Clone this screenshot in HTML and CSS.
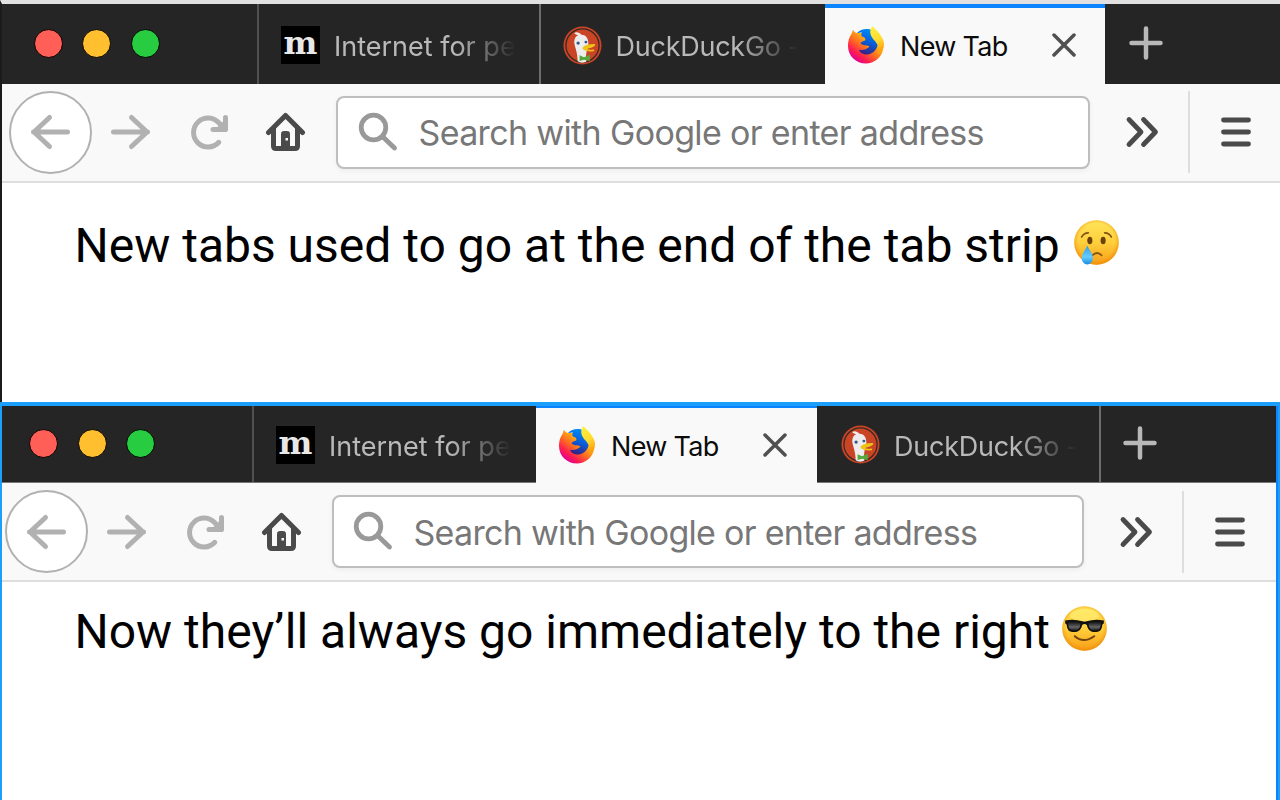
FILE: index.html
```html
<!DOCTYPE html>
<html lang="en">
<head>
<meta charset="utf-8">
<title>New tab placement</title>
<link rel="stylesheet" href="styles.css">
</head>
<body>
<svg class="sprites" aria-hidden="true">
  <defs>
    <linearGradient id="fox" x1=".85" y1=".1" x2=".2" y2=".9">
      <stop offset="0" stop-color="#fff044"/><stop offset=".3" stop-color="#ffb414"/><stop offset=".58" stop-color="#ff6a22"/><stop offset=".82" stop-color="#ff1d50"/><stop offset="1" stop-color="#e00094"/>
    </linearGradient>
    <linearGradient id="globe" x1=".7" y1="0" x2=".4" y2="1">
      <stop offset="0" stop-color="#0090f5"/><stop offset=".5" stop-color="#075fdc"/><stop offset="1" stop-color="#372080"/>
    </linearGradient>
    <linearGradient id="flame" x1="0" y1="0" x2=".3" y2="1">
      <stop offset="0" stop-color="#fff23e"/><stop offset=".6" stop-color="#ffdb2e"/><stop offset="1" stop-color="#ff9d10"/>
    </linearGradient>
    <linearGradient id="face" x1="0" y1="0" x2="0" y2="1">
      <stop offset="0" stop-color="#ffe45a"/><stop offset=".5" stop-color="#ffcf3c"/><stop offset="1" stop-color="#f79d16"/>
    </linearGradient>
    <radialGradient id="shade" cx=".5" cy=".48" r=".53">
      <stop offset=".78" stop-color="#f08a00" stop-opacity="0"/><stop offset="1" stop-color="#e88508" stop-opacity=".65"/>
    </radialGradient>
    <linearGradient id="tear" x1="0" y1="0" x2="0" y2="1">
      <stop offset="0" stop-color="#2d9fe0"/><stop offset=".6" stop-color="#66ccff"/><stop offset="1" stop-color="#168be0"/>
    </linearGradient>
    <linearGradient id="lens" x1="0" y1="0" x2="0" y2="1">
      <stop offset="0" stop-color="#111"/><stop offset=".6" stop-color="#666"/><stop offset="1" stop-color="#1a1a1a"/>
    </linearGradient>
  </defs>
  <symbol id="i-arrow" viewBox="0 0 40 40"><path d="M3.5 20H37.500M19.500 5.500 4 20 19.500 34.500"/></symbol>
  <symbol id="i-reload" viewBox="0 0 40 40"><path d="M29.800 30.300A14.500 14.500 0 1 1 30 11L36 17"/><path d="M36.500 5.500V17.500H24"/><path class="solid" d="M36 11v6h-6z"/></symbol>
  <symbol id="i-home" viewBox="0 0 42 42"><path d="M4.500 21.500 21.500 4.500 38.500 21.500M9.500 18V35Q9.500 37.500 12 37.500H31Q33.500 37.500 33.500 35V18"/><path class="solid thin" d="M17.500 37V22.500Q17.500 20.500 19.500 20.500H23.500Q25.500 20.500 25.500 22.500V37Z"/><rect class="knob" x="21.500" y="27" width="2.500" height="2.500"/></symbol>
  <symbol id="i-search" viewBox="0 0 42 42"><circle cx="16.500" cy="15.500" r="12.300"/><path d="M25.500 24.500 37.500 36"/></symbol>
  <symbol id="i-more" viewBox="0 0 36 34"><path d="M4 4.500 16 17 4 29.500M18.500 4.500 30.500 17 18.500 29.500"/></symbol>
  <symbol id="i-menu" viewBox="0 0 30 30"><path d="M2.500 3H27.500M2.500 15H27.500M2.500 27H27.500"/></symbol>
  <symbol id="i-close" viewBox="0 0 24 24"><path d="M2 2 22 22M22 2 2 22"/></symbol>
  <symbol id="i-plus" viewBox="0 0 34 34"><path d="M17 2.500V31.500M2.500 17H31.500"/></symbol>
  <symbol id="i-firefox" viewBox="0 0 38 38">
    <path fill="url(#fox)" d="M6 3.500C7 6 8 6.500 10 7H30C36 12 38 18 36 24C34 32 27 37.500 19 37.500C9 37.500 1 30 1 20C1 14 3 10 4.500 8C5 6.500 5.500 5 6 3.500Z"/>
    <path fill="url(#globe)" d="M10 7C15 1.500 26 1.500 30 9C33 17 30 27 21 28.500C17 29 13 27 12 24C16 24 20 23.500 22.500 20.500C20.500 19 17 20 14 18C13 16.500 15 15.500 18 14.500C19 13.500 18.500 12 16.500 11C14 11 14 8 15 6.500C13 6.500 12 7 10 7Z"/>
    <path fill="url(#flame)" d="M25.500 0C27 2.500 34 7 36.500 15C38 22 34 27 30.500 29C33 22 31 19 28 15C24 11 21 6 25.500 0Z"/>
  </symbol>
  <symbol id="i-duck" viewBox="0 0 40 40">
    <circle cx="20" cy="20" r="19.500" fill="#ca4526"/><circle cx="20" cy="20" r="17" fill="none" stroke="#382822" stroke-width="1.300"/>
    <path fill="#ededed" d="M11.500 7.500C13 5.500 17 6.500 19 9C23 9 26 12 26 18C26 23 22.500 27 24 36.500C22 38 17 38 15 36C15 28 12.500 23 11.500 17C11.500 13 13 10.500 15.500 9.500Q13 9 11.500 7.500Z"/>
    <circle cx="15.500" cy="17.500" r="1.700" fill="#345789"/><circle cx="23.500" cy="16.500" r="1.500" fill="#345789"/>
    <path fill="none" stroke="#eec316" stroke-width="2" stroke-linecap="round" d="M21 22.500Q24 19.500 32 19.500Q29 22 21 23Q25 26 31 25"/>
    <path fill="#55a83e" d="M17 30 21.500 32 27.500 29.500V36L21.500 34.500 17 36Z"/>
  </symbol>
  <symbol id="i-cry" viewBox="0 0 44 44">
    <circle cx="22" cy="22" r="21.800" fill="url(#face)"/><circle cx="22" cy="22" r="21.800" fill="url(#shade)"/>
    <ellipse cx="15.500" cy="20" rx="2.500" ry="3.700" fill="#69420e"/><ellipse cx="28.500" cy="20" rx="2.500" ry="3.700" fill="#69420e"/>
    <path fill="none" stroke="#825317" stroke-width="1.700" stroke-linecap="round" d="M7.500 16.500Q9.500 12.700 14 12.500M30 12.500Q34.500 12.700 36.500 16.500M18 34.500Q22.500 30 27 34.500"/>
    <path fill="url(#tear)" d="M13 25C15 30 18.500 33 18.500 37C18.500 41 16 43.500 13 43.500S7.500 41 7.500 37C7.500 33 11 30 13 25Z"/>
  </symbol>
  <symbol id="i-cool" viewBox="0 0 44 44">
    <circle cx="22" cy="22" r="21.800" fill="url(#face)"/><circle cx="22" cy="22" r="21.800" fill="url(#shade)"/>
    <ellipse cx="22" cy="9" rx="14" ry="6" fill="#fff27b" opacity=".5"/>
    <path fill="#111" d="M3 14.200Q12 12.500 20 15Q22 15.600 24 15Q32 12.500 41 14.200L40.800 17L39.500 18C39 24 36.500 25.500 32 25.500C27 25.500 25 22 24.300 18.500Q22 16.800 19.700 18.500C19 22 17 25.500 12 25.500C7.500 25.500 5 24 4.500 18L3.200 17Z"/>
    <path fill="url(#lens)" d="M6 16Q12 14.800 18 16.500C18 21 16 24 12 24C7.500 24 6 22 6 16ZM26 16.500Q32 14.800 38 16C38 22 36.500 24 32 24C28 24 26 21 26 16.500Z"/>
    <path fill="none" stroke="#70420f" stroke-width="1.900" stroke-linecap="round" d="M12.500 29.500Q21 37 31.500 29.500"/>
  </symbol>
</svg>

<main>
<section class="shot before">
  <div class="tabs">
    <div class="lights"><i class="red"></i><i class="yellow"></i><i class="green"></i></div>
    <div class="tab ruled"><span class="moz">m</span><span class="label faded">Internet for pe</span></div>
    <div class="tab ruled light"><svg class="favicon"><use href="#i-duck"/></svg><span class="label faded duck">DuckDuckGo -</span></div>
    <div class="tab active"><svg class="firefox"><use href="#i-firefox"/></svg><span class="label">New Tab</span><svg class="close"><use href="#i-close"/></svg></div>
    <div class="newtab"><svg class="plus"><use href="#i-plus"/></svg></div>
  </div>
  <div class="nav">
    <span class="back"><svg class="arrow"><use href="#i-arrow"/></svg></span>
    <svg class="arrow forward"><use href="#i-arrow"/></svg>
    <svg class="reload"><use href="#i-reload"/></svg>
    <svg class="home"><use href="#i-home"/></svg>
    <div class="urlbar"><svg class="search"><use href="#i-search"/></svg><span class="hint">Search with Google or enter address</span></div>
    <svg class="more"><use href="#i-more"/></svg>
    <span class="divider"></span>
    <svg class="menu"><use href="#i-menu"/></svg>
  </div>
  <p class="caption"><span>New tabs used to go at the end of the tab strip</span><svg class="emoji"><use href="#i-cry"/></svg></p>
</section>

<section class="shot after">
  <div class="tabs">
    <div class="lights"><i class="red"></i><i class="yellow"></i><i class="green"></i></div>
    <div class="tab ruled"><span class="moz">m</span><span class="label faded">Internet for pe</span></div>
    <div class="tab active"><svg class="firefox"><use href="#i-firefox"/></svg><span class="label">New Tab</span><svg class="close"><use href="#i-close"/></svg></div>
    <div class="tab last"><svg class="favicon"><use href="#i-duck"/></svg><span class="label faded duck">DuckDuckGo -</span></div>
    <div class="newtab ruled light"><svg class="plus"><use href="#i-plus"/></svg></div>
  </div>
  <div class="nav">
    <span class="back"><svg class="arrow"><use href="#i-arrow"/></svg></span>
    <svg class="arrow forward"><use href="#i-arrow"/></svg>
    <svg class="reload"><use href="#i-reload"/></svg>
    <svg class="home"><use href="#i-home"/></svg>
    <div class="urlbar"><svg class="search"><use href="#i-search"/></svg><span class="hint">Search with Google or enter address</span></div>
    <svg class="more"><use href="#i-more"/></svg>
    <span class="divider"></span>
    <svg class="menu"><use href="#i-menu"/></svg>
  </div>
  <p class="caption second"><span>Now they’ll always go immediately to the right</span><svg class="emoji"><use href="#i-cool"/></svg></p>
</section>
</main>
</body>
</html>
```
FILE: styles.css
```css
* { box-sizing: border-box; }
body { margin: 0; background: #fff; overflow: hidden; }
main { width: 1280px; height: 800px; overflow: hidden; }
svg { display: block; flex: none; fill: none; stroke-linecap: round; stroke-linejoin: round; }
.sprites { position: absolute; width: 0; height: 0; }

.shot { background: #fff; }
.before { height: 402px; border-top: 4px solid #e1e1e1; border-left: 2px solid #1b1b1b; }
.after { height: 398px; border: solid #1b9ffb; border-width: 4px 2px 0 2px; box-shadow: inset -2px 0 #0a84ff; padding-right: 2px; }

.tabs { display: grid; background: #252525; }
.before .tabs { height: 80px; grid-template-columns: 255px 282px 286px 280px 1fr; }
.after .tabs { height: 77px; grid-template-columns: 250px 284px 281px 282px 1fr; border-bottom: 1px solid #777; }

.lights { display: flex; gap: 19.500px; padding: 25px 0 0 31.500px; }
.after .lights { padding: 23px 0 0 27.200px; }
.lights i { width: 29px; height: 29px; border-radius: 50%; border: 1px solid; }
.red { background: #ff5f57; border-color: #e14942; }
.yellow { background: #ffbf2f; border-color: #dfa123; }
.green { background: #28cc40; border-color: #14ae2c; }

.tab { display: flex; align-items: center; padding: 2px 0 0 22px; color: #b9b9b9; min-width: 0; }
.before .ruled.light.tab { padding-left: 21.500px; }
.after .tab { padding-top: 1px; }
.after .last { padding-left: 24px; }
.ruled { border-left: 2px solid #505050; }
.ruled.light { border-color: #6d6d6d; }
.active { background: #f9f9f9; color: #0c0c0d; box-shadow: inset 0 4px #0a84ff; }
.after .active { box-shadow: inset 0 2px #0a84ff, 0 1px #f9f9f9; }

.moz { width: 39px; height: 38px; flex: none; background: #000; color: #e8e8e8; text-align: center; font: bold 32px/35px "DejaVu Serif", serif; }
.favicon { width: 39px; height: 39px; flex: none; }
.firefox { width: 38px; height: 38px; }
.label { font: 27px/40px Inter, sans-serif; white-space: nowrap; margin-left: 14px; padding-top: 4px; }
.faded { width: 184px; overflow: hidden; -webkit-mask-image: linear-gradient(90deg, #000 66%, transparent 99%); mask-image: linear-gradient(90deg, #000 66%, transparent 99%); }
.duck { letter-spacing: -.25px; }
.active .label { width: 152px; margin-left: 15px; letter-spacing: -.7px; }
.close { width: 24px; height: 24px; stroke: #505050; stroke-width: 3.500; }
.newtab { padding: 22px 0 0 24px; }
.after .newtab { padding: 19.500px 0 0 22px; }
.plus { width: 34px; height: 34px; stroke: #b8b8b8; stroke-width: 4.500; }

.nav { display: flex; align-items: center; height: 99px; padding: 0 0 1px 7px; background: #f9f9f9; border-bottom: 2px solid #dedede; }
.after .nav { padding-left: 3px; padding-bottom: 0; }
.back { width: 83px; height: 83px; flex: none; border: 2px solid #b1b1b1; border-radius: 50%; background: #fff; display: grid; place-items: center; }
.back .arrow { margin-right: 2px; }
.arrow, .reload { width: 40px; height: 40px; stroke: #b1b1b1; stroke-width: 5; }
.forward { transform: scaleX(-1); margin-left: 19px; }
.reload { margin-left: 38px; }
.home { width: 42px; height: 42px; margin-left: 35px; stroke: #4a4a4a; stroke-width: 5; }
.solid { fill: #b1b1b1; }
.solid.thin { fill: #4a4a4a; stroke-width: 1; }
.knob { fill: #f9f9f9; stroke: none; }
.urlbar { width: 754px; height: 73px; margin-left: 30px; flex: none; display: flex; align-items: center; background: #fff; border: 2px solid #bebebe; border-radius: 8px; box-shadow: 0 2px 5px #0000000d; }
.search { width: 42px; height: 42px; margin: 1px 0 0 18.500px; stroke: #999; stroke-width: 4.800; }
.hint { margin: 2px 0 0 20px; font: 34px/44px Inter, sans-serif; letter-spacing: -.65px; color: #777; white-space: nowrap; }
.more { width: 36px; height: 34px; margin-left: 35px; stroke: #4a4a4a; stroke-width: 4.800; }
.divider { width: 2px; height: 82px; margin-left: 27px; flex: none; background: #dedede; }
.menu { width: 30px; height: 30px; margin-left: 31px; stroke: #4a4a4a; stroke-width: 4.800; }
.after .urlbar { width: 752px; }
.after .search { margin-left: 17.500px; }
.after .hint { letter-spacing: -.7px; }

.caption { display: flex; align-items: center; margin: 33px 0 0 72.500px; font: 48px/60px Roboto, sans-serif; color: #000; white-space: nowrap; }
.second { margin-top: 20px; }
.emoji { width: 45px; height: 45px; margin: 0 0 7px 14px; }
.second .emoji { margin-left: 12px; }
```
